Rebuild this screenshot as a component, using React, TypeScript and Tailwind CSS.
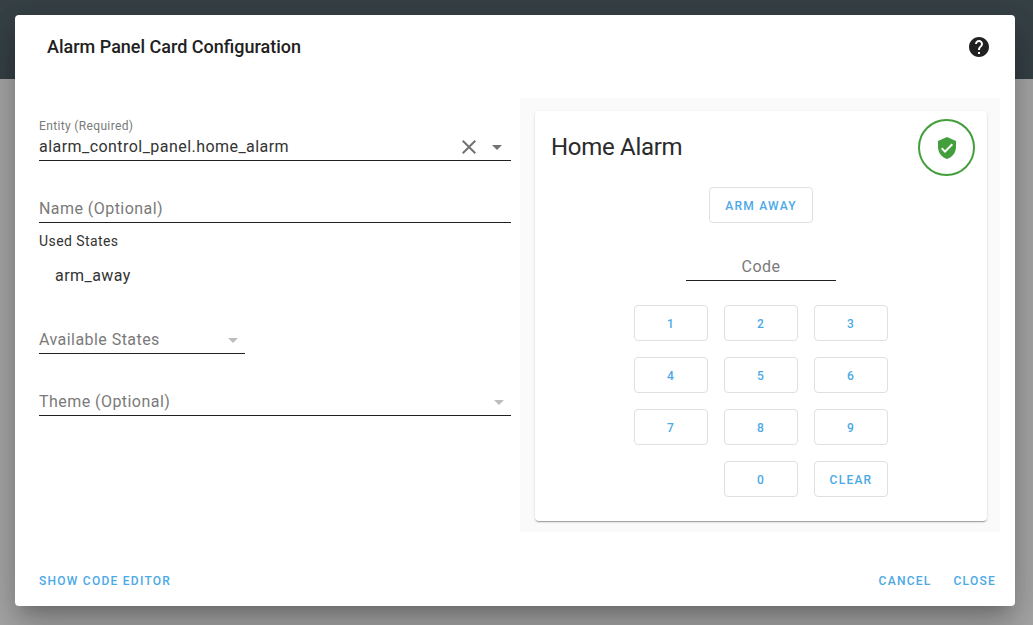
import React from "react";

const KEYS = ["1", "2", "3", "4", "5", "6", "7", "8", "9", "", "0", "CLEAR"];

function Caret({ className }: { className: string }) {
  return (
    <svg viewBox="0 0 24 24" className={`size-6 shrink-0 ${className}`} fill="currentColor">
      <path d="M7 10l5 5 5-5z" />
    </svg>
  );
}

function Field({
  label,
  className = "w-[472px]",
  caret = false,
}: {
  label: string;
  className?: string;
  caret?: boolean;
}) {
  return (
    <div className={`flex shrink-0 items-end justify-between border-b border-[#212121] pb-px text-[#7a7a7a] ${className}`}>
      <span className="leading-6">{label}</span>
      {caret && <Caret className="text-[#bdbdbd]" />}
    </div>
  );
}

function OutlinedButton({ children, className }: { children: React.ReactNode; className: string }) {
  return (
    <button
      className={`flex h-9 items-center justify-center rounded-[4px] border border-[#e0e0e0] pt-px text-[12px] font-medium tracking-[1.25px] text-[#4ba9e6] ${className}`}
    >
      {children}
    </button>
  );
}

export default function App() {
  return (
    <div className="h-[625px] w-[1033px] overflow-hidden bg-[linear-gradient(to_bottom,#364146_0,#364146_79px,#a8a8a8_79px,#a8a8a8_100%)] p-[15px] font-['Roboto','Liberation_Sans',sans-serif] text-base tracking-[0.45px] text-[#212121]">
      <div className="flex h-[591px] w-[1000px] flex-col rounded-[4px] bg-white shadow-[0px_11px_15px_-7px_rgba(0,0,0,0.2),0px_24px_38px_3px_rgba(0,0,0,0.14),0px_9px_46px_8px_rgba(0,0,0,0.12)]">
        <header className="flex h-16 shrink-0 items-center justify-between pr-6 pl-8">
          <h1 className="text-[18px] leading-6 font-medium tracking-[0]">Alarm Panel Card Configuration</h1>
          <svg viewBox="0 0 24 24" className="size-6" fill="currentColor">
            <path d="M12 2C6.48 2 2 6.48 2 12s4.480 10 10 10 10-4.480 10-10S17.520 2 12 2zm1 17h-2v-2h2v2zm2.070-7.750l-.9.920C13.450 12.900 13 13.500 13 15h-2v-.5c0-1.100.450-2.100 1.170-2.830l1.240-1.260c.370-.360.590-.860.590-1.410 0-1.100-.9-2-2-2s-2 .9-2 2H8c0-2.210 1.790-4 4-4s4 1.790 4 4c0 .880-.360 1.680-.930 2.250z" />
          </svg>
        </header>

        <main className="flex min-h-0 flex-1 justify-between pr-[15px] pl-6">
          <section className="flex w-[472px] flex-col pt-[39px]">
            <label className="text-[12px] leading-4 tracking-[0.35px] text-[#7a7a7a]">Entity (Required)</label>
            <div className="flex h-[27px] items-start justify-between border-b border-[#212121] pt-px">
              <span className="leading-6 text-[#333]">alarm_control_panel.home_alarm</span>
              <span className="flex gap-1 pr-[2px] text-[#737373]">
                <svg viewBox="0 0 24 24" className="size-6" fill="currentColor">
                  <path d="M19 6.410 17.590 5 12 10.590 6.410 5 5 6.410 10.590 12 5 17.590 6.410 19 12 13.410 17.590 19 19 17.590 13.410 12z" />
                </svg>
                <Caret className="text-[#737373]" />
              </span>
            </div>
            <Field label="Name (Optional)" className="h-[62px]" />
            <p className="mt-2 text-[14px] leading-5 tracking-[0.42px] text-[#333]">Used States</p>
            <p className="mt-[13px] pl-4 leading-6 text-[#333]">arm_away</p>
            <Field label="Available States" className="h-[66px] w-[206px]" caret />
            <Field label="Theme (Optional)" className="h-[62px]" caret />
          </section>

          <section className="mt-[19px] h-[434px] w-[480px] bg-[#fafafa] pt-[13px] pl-[15px]">
            <div className="flex h-[410px] w-[452px] flex-col items-center rounded-[4px] bg-white shadow-[0px_2px_1px_-1px_rgba(0,0,0,0.2),0px_1px_1px_0px_rgba(0,0,0,0.14),0px_1px_3px_0px_rgba(0,0,0,0.12)]">
              <div className="flex w-full justify-between pt-2 pr-3 pl-4">
                <h2 className="pt-3 text-[24px] leading-8 tracking-[-0.012em] text-[#2b2b2b]">Home Alarm</h2>
                <div className="flex size-[57px] items-center justify-center rounded-full border-2 border-[#439f3c] text-[#439f3c]">
                  <svg viewBox="0 0 24 24" className="size-6" fill="currentColor">
                    <path d="M12 1L3 5v6c0 5.550 3.840 10.740 9 12 5.160-1.260 9-6.450 9-12V5l-9-4zm-2 16l-4-4 1.410-1.410L10 14.170l6.590-6.590L18 9l-8 8z" />
                  </svg>
                </div>
              </div>
              <OutlinedButton className="mt-[11px] w-[104px]">ARM AWAY</OutlinedButton>
              <div className="mt-[31px] flex h-[27px] w-[150px] justify-center border-b border-[#212121] pt-px leading-6 text-[#7a7a7a]">
                Code
              </div>
              <div className="mt-6 grid grid-cols-3 gap-4">
                {KEYS.map((key, i) =>
                  key ? (
                    <OutlinedButton key={i} className="w-[74px]">
                      {key}
                    </OutlinedButton>
                  ) : (
                    <span key={i} />
                  ),
                )}
              </div>
            </div>
          </section>
        </main>

        <footer className="flex h-[52px] shrink-0 items-center justify-between pt-[2px] pr-[19px] pl-6 text-[12px] font-medium text-[#4ba9e6]">
          <button className="tracking-[1.25px]">SHOW CODE EDITOR</button>
          <div className="flex gap-[22px] tracking-[1.25px]">
            <button>CANCEL</button>
            <button>CLOSE</button>
          </div>
        </footer>
      </div>
    </div>
  );
}
